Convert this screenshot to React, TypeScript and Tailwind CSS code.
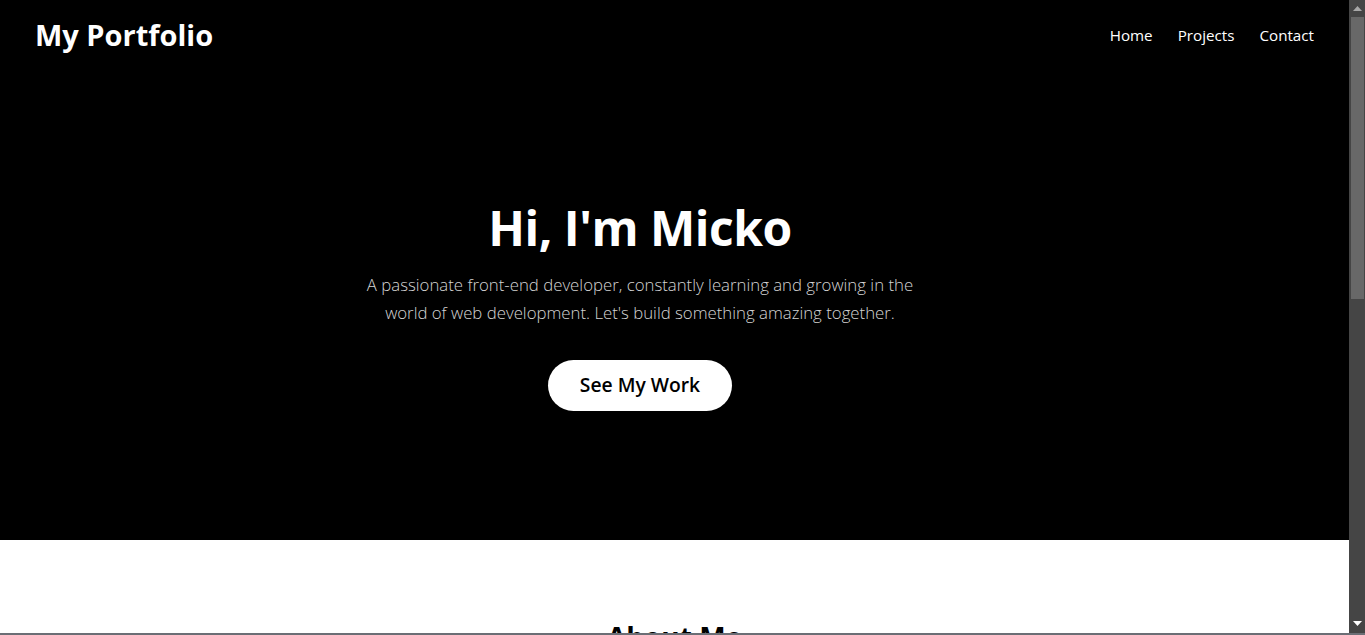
export default function App() {
  return (
    <div className="h-screen w-full flex flex-col border-b-2 border-[#6b6e75]" style={{ fontFamily: '"Open Sans", "Noto Sans", sans-serif' }}>
      <div className="flex-1 min-h-0 flex">
        <main className="flex-1 min-w-0 overflow-hidden">
          <section className="bg-black text-white">
            <header className="flex items-center justify-between pl-[35px] pr-[35px] h-[70px]">
              <h1 className="text-[29px] font-bold">My Portfolio</h1>
              <nav className="flex gap-[25px] text-[15.2px]">
                <a>Home</a>
                <a>Projects</a>
                <a>Contact</a>
              </nav>
            </header>
            <div className="w-[1280px] h-[470px] flex flex-col items-center justify-center text-center pb-[12px]">
              <h2 className="text-[48px] font-bold leading-tight tracking-[-0.5px] mt-[10px]">Hi, I'm Micko</h2>
              <p className="mt-[13px] max-w-[560px] text-[16.8px] leading-[28px] font-light text-[#d4d4d4]">
                A passionate front-end developer, constantly learning and growing in the world of web development. Let's build something amazing together.
              </p>
              <button className="mt-[33px] bg-white text-black rounded-full px-8 h-[51px] text-[19.3px] font-semibold">See My Work</button>
            </div>
          </section>
          <section className="bg-white text-black pt-[83px] pb-20 text-center">
            <h2 className="text-[28px] leading-none font-bold">About Me</h2>
            <p className="mt-6 max-w-[600px] mx-auto text-[18px] text-[#333]">I'm a developer who enjoys building clean, responsive and user friendly websites.</p>
          </section>
        </main>
        <div className="w-[16px] bg-[#454545] flex flex-col">
          <div className="h-[17px] flex items-center justify-center">
            <svg width="9" height="5" viewBox="0 0 9 5"><path d="M4.5 0 L9 5 L0 5 Z" fill="#a8a8a8" /></svg>
          </div>
          <div className="h-[282px] ml-[2px] mr-[1px] bg-[#686868]" />
          <div className="flex-1" />
          <div className="h-[17px] flex items-center justify-center pb-[2px]">
            <svg width="9" height="5" viewBox="0 0 9 5"><path d="M0 0 L9 0 L4.5 5 Z" fill="#ffffff" /></svg>
          </div>
        </div>
      </div>
    </div>
  );
}
